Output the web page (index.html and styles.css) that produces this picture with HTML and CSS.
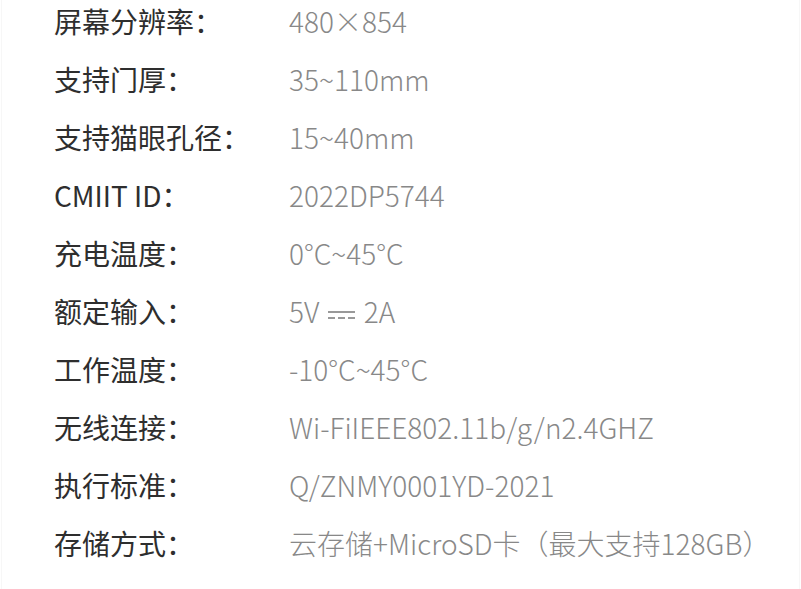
FILE: index.html
```html
<!DOCTYPE html>
<html lang="zh-CN">
<head>
    <meta charset="UTF-8">
    <meta name="viewport" content="width=device-width, initial-scale=1.0">
    <title>产品参数</title>
    <link rel="stylesheet" href="styles.css">
</head>
<body>
    <div class="page">
        <div class="specs">
            <div class="row"><span class="label">屏幕分辨率：</span><span class="value">480×854</span></div>
            <div class="row"><span class="label">支持门厚：</span><span class="value">35~110mm</span></div>
            <div class="row"><span class="label">支持猫眼孔径：</span><span class="value">15~40mm</span></div>
            <div class="row"><span class="label">CMIIT ID：</span><span class="value">2022DP5744</span></div>
            <div class="row"><span class="label">充电温度：</span><span class="value">0°C~45°C</span></div>
            <div class="row"><span class="label">额定输入：</span><span class="value">5V <span class="dc" title="直流"></span> 2A</span></div>
            <div class="row"><span class="label">工作温度：</span><span class="value">-10°C~45°C</span></div>
            <div class="row"><span class="label">无线连接：</span><span class="value">Wi-FiIEEE802.11b/g/n2.4GHZ</span></div>
            <div class="row"><span class="label">执行标准：</span><span class="value">Q/ZNMY0001YD-2021</span></div>
            <div class="row"><span class="label">存储方式：</span><span class="value">云存储+MicroSD卡（最大支持128GB）</span></div>
        </div>
    </div>
</body>
</html>
```

FILE: styles.css
```css
body {
    margin: 0;
    background: #ffffff;
    font-family: "Noto Sans CJK SC", "Noto Sans", sans-serif;
}

.page {
    width: 797px;
    height: 589px;
    margin-left: 1px;
    border-left: 1px solid #f7f7f7;
    border-right: 1px solid #f7f7f7;
    overflow: hidden;
}

.specs {
    margin-top: -8px;
    padding-left: 52px;
}

.row {
    display: grid;
    grid-template-columns: 235px 1fr;
    height: 58px;
    align-items: center;
    font-size: 28px;
}

.label {
    color: #2e2e2e;
    font-weight: 400;
}

.value {
    color: #888888;
    font-weight: 300;
}

/* direct current symbol: solid line over a dashed one */
.dc {
    display: inline-block;
    width: 27px;
    height: 6px;
    margin: 0 3px 0 2px;
    vertical-align: 4px;
    border-top: 2px solid #999999;
    background: repeating-linear-gradient(to right, #999999 0 7px, transparent 7px 10px) bottom / 100% 2px no-repeat;
}
```
